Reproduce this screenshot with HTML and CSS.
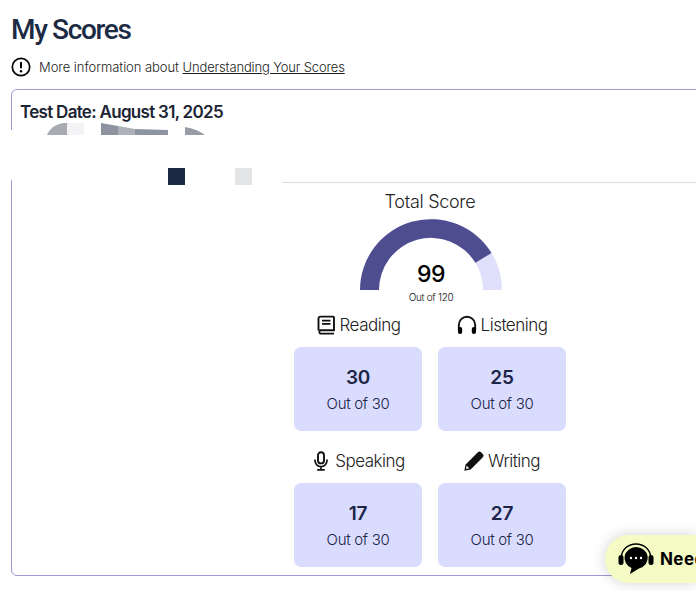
FILE: index.html
```html
<!DOCTYPE html>
<html lang="en">
<head>
<meta charset="utf-8">
<title>My Scores</title>
<link rel="stylesheet" href="styles.css">
</head>
<body>
<main class="page">
  <h1 class="title">My Scores</h1>
  <p class="info">
    <svg class="info-icon" viewBox="0 0 20 20" aria-hidden="true"><circle cx="10" cy="10" r="8.7" fill="none" stroke="#000" stroke-width="1.7"/><rect x="9" y="4.8" width="2" height="6.8" rx="1"/><circle cx="10" cy="14.2" r="1.2"/></svg>
    <span>More information about <a href="#">Understanding Your Scores</a></span>
  </p>
  <section class="card">
    <h2 class="date">Test Date: August 31, 2025</h2>
    <div class="tabs"></div>
    <div class="scores">
      <div class="total-label">Total Score</div>
      <div class="gauge">
        <svg class="gauge-arc" viewBox="0 0 142 71" aria-hidden="true">
          <path d="M0 71A71 71 0 0 1 142 71H123A52 52 0 0 0 19 71Z" fill="#e0e0fc"/>
          <path d="M0 71A71 71 0 0 1 131.5 34L115.4 43.8A52 52 0 0 0 19 71Z" fill="#4d4d8f"/>
        </svg>
        <div class="gauge-value">99</div>
        <div class="gauge-out">Out of 120</div>
      </div>
      <div class="grid">
        <div class="skill">
          <div class="skill-label">
            <svg class="icon" viewBox="0 0 20 20" aria-hidden="true"><path d="M2.500 15.500V3.600A2 2 0 0 1 4.500 1.600h12.500a1 1 0 0 1 1 1v12.600H4.400a1.900 1.900 0 0 0 0 3.400h13.600" fill="none" stroke="#111" stroke-width="1.900"/><path d="M6 5.700h8.500M6 8.800h8.500" stroke="#111" stroke-width="1.700"/></svg>
            <span>Reading</span>
          </div>
          <div class="box"><strong>30</strong><span>Out of 30</span></div>
        </div>
        <div class="skill">
          <div class="skill-label">
            <svg class="icon" viewBox="0 0 20 20" aria-hidden="true"><path d="M1.800 15V10a8.200 8.200 0 0 1 16.400 0v5" fill="none" stroke="#111" stroke-width="1.900"/><rect x="1" y="12" width="4.200" height="7" rx="2"/><rect x="14.800" y="12" width="4.200" height="7" rx="2"/></svg>
            <span>Listening</span>
          </div>
          <div class="box"><strong>25</strong><span>Out of 30</span></div>
        </div>
        <div class="skill">
          <div class="skill-label">
            <svg class="icon" viewBox="0 0 20 20" aria-hidden="true"><rect x="7" y="1.200" width="6" height="11.200" rx="3" fill="none" stroke="#111" stroke-width="1.900"/><path d="M4 8.600v1a6 6 0 0 0 12 0v-1M10 15.600v2.800M6.200 18.800h7.600" fill="none" stroke="#111" stroke-width="1.700"/></svg>
            <span>Speaking</span>
          </div>
          <div class="box"><strong>17</strong><span>Out of 30</span></div>
        </div>
        <div class="skill">
          <div class="skill-label">
            <svg class="icon" viewBox="0 0 20 20" aria-hidden="true"><path d="M0.300 19.700l1.300-6.300L13.600 1.400a2.600 2.600 0 0 1 3.700 0l1.300 1.300a2.600 2.600 0 0 1 0 3.700L6.600 18.400z" fill="#111"/><path d="M2 18l.7-3.200 2.500 2.500z" fill="#fff"/></svg>
            <span>Writing</span>
          </div>
          <div class="box"><strong>27</strong><span>Out of 30</span></div>
        </div>
      </div>
    </div>
  </section>
</main>
<svg class="redaction" viewBox="0 0 282 62" aria-hidden="true">
  <path d="M0 7H12V12H282V62H12V57H0Z" fill="#fff"/>
  <path d="M47 12A20 20 0 0 1 67 0V12Z" fill="#a8abb2"/>
  <rect x="67" width="17" height="12" fill="#f4f4f6"/>
  <path d="M101 0L118 3V12H101Z" fill="#8e93a0"/>
  <path d="M118 3L135 6V12H118Z" fill="#adb0b8"/>
  <path d="M135 6L168 7V12H135Z" fill="#8e93a0"/>
  <path d="M185 4Q197 6 205 12H185Z" fill="#979ba6"/>
  <rect x="168" y="45" width="17" height="17" fill="#1c2a44"/>
  <rect x="235" y="45" width="17" height="17" fill="#e3e4e6"/>
</svg>
<button class="help" type="button">
  <svg class="help-icon" viewBox="0 0 36 32" aria-hidden="true">
    <path d="M3.500 17V14a14.500 13 0 0 1 29 0v3" fill="none" stroke="#000" stroke-width="1.400"/>
    <rect x="0.500" y="12" width="5" height="10" rx="2.500"/><rect x="30.500" y="12" width="5" height="10" rx="2.500"/>
    <path d="M18 4a12 11 0 0 1 3 21.600L12 31l1.500-6A12 11 0 0 1 18 4Z"/>
    <circle cx="13" cy="15" r="1.200" fill="#fff"/><circle cx="18" cy="15" r="1.200" fill="#fff"/><circle cx="23" cy="15" r="1.200" fill="#fff"/>
  </svg>
  <span>Need Help?</span>
</button>
</body>
</html>
```

FILE: styles.css
```css
* { box-sizing: border-box; }
html, body { margin: 0; height: 100%; overflow: hidden; background: #fff; }
body {
  position: relative;
  font-family: Inter, "Liberation Sans", sans-serif;
  color: #1c2a44;
}
.page { width: 860px; padding: 14px 11px 0; }
.title {
  margin: 0;
  font-family: Roboto, "Liberation Sans", sans-serif;
  font-size: 28px;
  line-height: 32px;
  font-weight: 500;
  letter-spacing: -1.35px;
}
.info {
  display: flex;
  align-items: center;
  gap: 8px;
  margin: 9px 0 0;
  height: 24px;
  font-size: 13px;
  font-weight: 300;
  letter-spacing: -0.05px;
  color: #1b1b1b;
}
.info-icon { width: 20px; height: 20px; flex: none; }
.info a { color: inherit; letter-spacing: -0.15px; }
.card {
  margin-top: 10px;
  width: 838px;
  height: 487px;
  border: 1px solid #9c9bd2;
  border-radius: 6px;
  padding: 10px 8px 0;
}
.date {
  margin: 0;
  font-size: 17px;
  line-height: 24px;
  font-weight: 600;
  letter-spacing: -0.7px;
  color: #1c2433;
}
.tabs { height: 59px; border-bottom: 1px solid #dcdce0; }
.scores { display: flex; flex-direction: column; align-items: center; color: #1b1b1b; }
.total-label {
  margin-top: 7px;
  font-size: 18px;
  font-weight: 300;
  line-height: 24px;
  letter-spacing: -0.3px;
  color: #222;
}
.gauge { position: relative; width: 142px; height: 91px; margin-top: 5px; margin-left: 2px; }
.gauge-arc { display: block; width: 142px; height: 71px; }
.gauge-value {
  position: absolute;
  left: 0; right: 0; top: 42px;
  text-align: center;
  font-size: 23px;
  line-height: 26px;
  font-weight: 500;
  letter-spacing: -0.6px;
  color: #000;
}
.gauge-out {
  position: absolute;
  left: 0; right: 0; top: 71px;
  text-align: center;
  font-size: 10px;
  font-weight: 300;
  line-height: 14px;
  letter-spacing: -0.3px;
  color: #111;
}
.grid { display: grid; grid-template-columns: 128px 128px; column-gap: 16px; row-gap: 16px; margin-top: 1px; }
.skill { display: flex; flex-direction: column; align-items: center; gap: 8px; }
.skill-label {
  display: flex;
  align-items: center;
  justify-content: center;
  gap: 4px;
  height: 28px;
  font-size: 17px;
  font-weight: 300;
  letter-spacing: -0.5px;
  color: #222;
}
.icon { width: 20px; height: 20px; flex: none; }
.box {
  width: 128px;
  height: 84px;
  background: #d9dcfd;
  border-radius: 7px;
  display: flex;
  flex-direction: column;
  align-items: center;
  padding-top: 19px;
  color: #1c2448;
}
.box strong { font-size: 19px; line-height: 24px; font-weight: 600; letter-spacing: -0.2px; }
.box span { margin-top: 3px; font-size: 15px; font-weight: 300; line-height: 22px; letter-spacing: -0.3px; }
.redaction { position: absolute; left: 0; top: 123px; width: 282px; height: 62px; }
.help {
  position: absolute;
  left: 605px;
  top: 535px;
  width: 91px;
  height: 48px;
  display: flex;
  align-items: center;
  gap: 6px;
  padding: 0 0 0 13px;
  border: 0;
  border-radius: 24px 0 0 24px;
  background: #f5fbc4;
  box-shadow: 0 0 14px rgba(0, 0, 0, 0.18);
  font: 700 17px Inter, "Liberation Sans", sans-serif;
  letter-spacing: 0.4px;
  color: #000;
  white-space: nowrap;
  overflow: hidden;
}
.help-icon { width: 36px; height: 32px; flex: none; }
```
